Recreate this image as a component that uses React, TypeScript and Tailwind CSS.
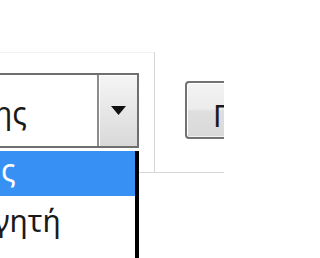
import { useState } from 'react';

const font = { fontFamily: '"Noto Sans", "DejaVu Sans", sans-serif' };

export default function App() {
  const [active] = useState(0);
  const items = [
    { label: 'ς', shift: 'ml-[1px]', pad: 'pt-[4px]' },
    { label: 'γητή', shift: 'ml-[-6px]', pad: 'pt-[10px]' },
  ];

  return (
    <div className="relative h-[258px] w-[224px] overflow-hidden bg-white text-[30px] text-[#1a1a1a]" style={font}>
      <div className="mt-[52px] flex h-[121px] border-b border-[#d6d6d6]">
        <div className="w-[154px] shrink-0 border-t border-[#f3f3f3] pt-[20px]">
          <div className="ml-[-4px] flex h-[75px] w-[143px] border-2 border-[#6f6f6f] bg-white">
            <div className="min-w-0 flex-1 overflow-hidden whitespace-nowrap">
              <div className="ml-[-4px] mt-[23px] leading-[30px]">ης</div>
            </div>
            <div className="flex w-[40px] items-center justify-center border-l-2 border-[#8c8c8c] bg-gradient-to-b from-[#f5f5f5] to-[#d9d9d9] shadow-[inset_1px_1px_0_#ffffff]">
              <svg width="15" height="9" viewBox="0 0 15 9">
                <path d="M0 0H15L7.5 9Z" fill="#111" />
              </svg>
            </div>
          </div>
        </div>
        <div className="min-w-0 flex-1 overflow-hidden border-l border-[#d6d6d6] pl-[30px] pt-[29px]">
          <button className="h-[58px] w-[90px] shrink-0 overflow-hidden whitespace-nowrap rounded-[4px] border-2 border-[#727272] bg-[linear-gradient(#f3f3f3_0%,#ececec_48%,#dfdfdf_52%,#d9d9d9_100%)] pl-[26px] pt-[12px] text-left leading-[30px] text-[#1a1a1a] shadow-[inset_1px_1px_0_#ffffff,inset_-1px_-1px_0_#f0f0f0]">
            Γλώσσα
          </button>
        </div>
      </div>
      <div className="absolute bottom-0 left-0 top-[151px] w-[139px] border-r-4 border-black bg-white">
        {items.map((item, i) => (
          <div
            key={item.label}
            className={
              i === active
                ? 'h-[45px] overflow-hidden whitespace-nowrap bg-[#3790f3] text-white'
                : 'h-[45px] overflow-hidden whitespace-nowrap'
            }
          >
            <div className={`${item.shift} ${item.pad} leading-[30px]`}>{item.label}</div>
          </div>
        ))}
      </div>
    </div>
  );
}
